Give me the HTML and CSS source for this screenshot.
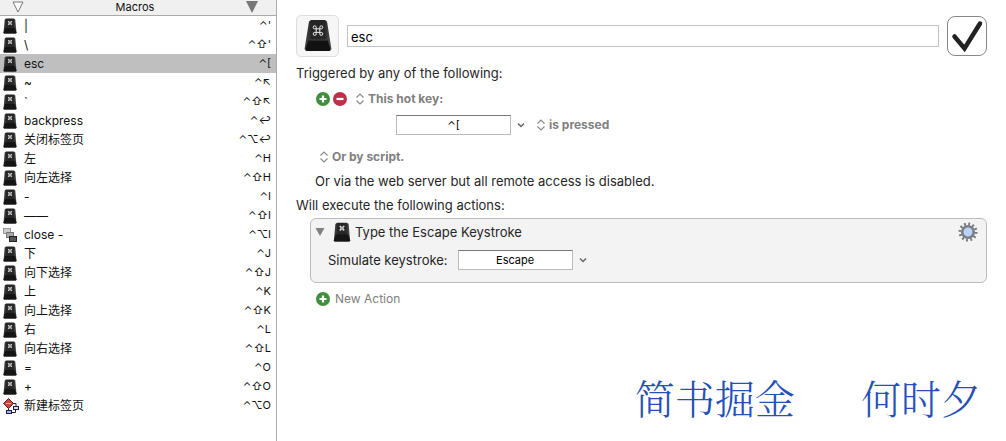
FILE: index.html
```html
<!DOCTYPE html>
<html lang="en">

<head>
    <meta charset="UTF-8">
    <meta name="viewport" content="width=device-width, initial-scale=1.0">
    <title>Macros</title>
    <link rel="stylesheet" href="styles.css">
</head>

<body>
    <!-- shared icons -->
    <svg class="icon_defs" aria-hidden="true">
        <defs>
            <linearGradient id="key_side" x1="0" y1="0" x2="1" y2="0">
                <stop offset="0" stop-color="#4a4a4a" />
                <stop offset="0.25" stop-color="#262626" />
                <stop offset="0.75" stop-color="#262626" />
                <stop offset="1" stop-color="#5a5a5a" />
            </linearGradient>
        </defs>
        <symbol id="key" viewBox="0 0 14 16">
            <path d="M3 0.500h8l1.300 1L13.500 14.500 13 15.500H1L0.500 14.500 1.700 1.500z" fill="url(#key_side)" />
            <path d="M2 10h10l1.500 4.500-.5 1H1l-.5-1z" fill="#151515" />
            <path d="M5.200 3.200l3.600 3.600M8.800 3.200L5.200 6.800" stroke="#d8d8d8" stroke-width="1.300" />
            <path d="M5.500 5h3M7 3.500v3" stroke="#aaa" stroke-width="1" />
        </symbol>
        <symbol id="windows" viewBox="0 0 14 16">
            <rect x="0.500" y="1.500" width="7" height="5" fill="#ccc" stroke="#999" />
            <rect x="3.500" y="5.500" width="7" height="5" fill="#aaa" stroke="#777" />
            <rect x="6.500" y="9.500" width="7" height="5" fill="#555" stroke="#222" />
        </symbol>
        <symbol id="flow" viewBox="0 0 16 16">
            <path d="M10 5.500h3v3M5.500 10v3" fill="none" stroke="#222" />
            <path d="M5.500 0.500l5 5-5 5-5-5z" fill="#c8443c" stroke="#6b1d1a" />
            <path d="M3 5.500h5" stroke="#eba39c" />
            <rect x="10.500" y="8.500" width="5" height="3" fill="#dde" stroke="#1c1c50" />
            <rect x="3.500" y="12.500" width="5" height="3" fill="#aab4f0" stroke="#1c1c50" />
            <path d="M9 14.500h3.500v-3" fill="none" stroke="#222" />
        </symbol>
        <symbol id="updown" viewBox="0 0 8 12">
            <path d="M0.500 4.500L4 1l3.500 3.500M0.500 7.500L4 11l3.500-3.500" fill="none" stroke="#888" stroke-width="1.100" />
        </symbol>
        <symbol id="chevron" viewBox="0 0 8 6">
            <path d="M1 1.500l3 3 3-3" fill="none" stroke="#666" stroke-width="1.500" />
        </symbol>
        <symbol id="plus" viewBox="0 0 14 14">
            <circle cx="7" cy="7" r="7" fill="#3f8f3f" />
            <path d="M7 3.500v7M3.500 7h7" stroke="#fff" stroke-width="2.200" />
        </symbol>
        <symbol id="minus" viewBox="0 0 14 14">
            <circle cx="7" cy="7" r="7" fill="#bf2f4a" />
            <path d="M3.500 7h7" stroke="#fff" stroke-width="2.200" />
        </symbol>
    </svg>

    <div class="editor">
        <div class="sidebar">
            <table class="macro_table">
                <thead>
                    <tr>
                        <th colspan="3">
                            <div class="list_head">
                                <button class="plain" aria-label="Filter"><svg width="12" height="12" viewBox="0 0 12 12"><path d="M1 1h10L6 11z" fill="#fff" stroke="#777" /></svg></button>
                                <span>Macros</span>
                                <button class="plain" aria-label="Sort"><svg width="12" height="12" viewBox="0 0 12 12"><path d="M0 0h12L6 12z" fill="#777" /></svg></button>
                            </div>
                        </th>
                    </tr>
                </thead>
                <tbody>
                    <tr><td class="icon"><svg><use href="#key" /></svg></td><td>|</td><td class="shortcut">⌃'</td></tr>
                    <tr><td class="icon"><svg><use href="#key" /></svg></td><td>\</td><td class="shortcut">⌃⇧'</td></tr>
                    <tr class="selected"><td class="icon"><svg><use href="#key" /></svg></td><td>esc</td><td class="shortcut">⌃[</td></tr>
                    <tr><td class="icon"><svg><use href="#key" /></svg></td><td>~</td><td class="shortcut">⌃↖</td></tr>
                    <tr><td class="icon"><svg><use href="#key" /></svg></td><td>`</td><td class="shortcut">⌃⇧↖</td></tr>
                    <tr><td class="icon"><svg><use href="#key" /></svg></td><td>backpress</td><td class="shortcut">⌃↩</td></tr>
                    <tr><td class="icon"><svg><use href="#key" /></svg></td><td>关闭标签页</td><td class="shortcut">⌃⌥↩</td></tr>
                    <tr><td class="icon"><svg><use href="#key" /></svg></td><td>左</td><td class="shortcut">⌃H</td></tr>
                    <tr><td class="icon"><svg><use href="#key" /></svg></td><td>向左选择</td><td class="shortcut">⌃⇧H</td></tr>
                    <tr><td class="icon"><svg><use href="#key" /></svg></td><td>-</td><td class="shortcut">⌃I</td></tr>
                    <tr><td class="icon"><svg><use href="#key" /></svg></td><td>——</td><td class="shortcut">⌃⇧I</td></tr>
                    <tr><td class="icon"><svg><use href="#windows" /></svg></td><td>close -</td><td class="shortcut">⌃⌥I</td></tr>
                    <tr><td class="icon"><svg><use href="#key" /></svg></td><td>下</td><td class="shortcut">⌃J</td></tr>
                    <tr><td class="icon"><svg><use href="#key" /></svg></td><td>向下选择</td><td class="shortcut">⌃⇧J</td></tr>
                    <tr><td class="icon"><svg><use href="#key" /></svg></td><td>上</td><td class="shortcut">⌃K</td></tr>
                    <tr><td class="icon"><svg><use href="#key" /></svg></td><td>向上选择</td><td class="shortcut">⌃⇧K</td></tr>
                    <tr><td class="icon"><svg><use href="#key" /></svg></td><td>右</td><td class="shortcut">⌃L</td></tr>
                    <tr><td class="icon"><svg><use href="#key" /></svg></td><td>向右选择</td><td class="shortcut">⌃⇧L</td></tr>
                    <tr><td class="icon"><svg><use href="#key" /></svg></td><td>=</td><td class="shortcut">⌃O</td></tr>
                    <tr><td class="icon"><svg><use href="#key" /></svg></td><td>+</td><td class="shortcut">⌃⇧O</td></tr>
                    <tr><td class="icon"><svg class="wide"><use href="#flow" /></svg></td><td>新建标签页</td><td class="shortcut">⌃⌥O</td></tr>
                </tbody>
            </table>
        </div>

        <main class="detail">
            <div class="title_row">
                <button class="macro_icon" aria-label="Macro icon">
                    <svg width="28" height="32" viewBox="0 0 28 32">
                        <path d="M5 1.500L7 0h14l2 1.500L27.500 29l-1.500 2H2L0.500 29z" fill="url(#key_side)" />
                        <path d="M4.500 20h19l3 9-1 2h-23l-1-2z" fill="#111" />
                        <path d="M4.500 20h19" stroke="#444" stroke-width="1" />
                        <path d="M12.200 8.800h3.600v3.600h-3.600zM12.200 8.800h-1.500A1.500 1.500 0 1 1 12.200 7.300zM15.800 8.800V7.300A1.500 1.500 0 1 1 17.300 8.800zM15.800 12.400h1.500A1.500 1.500 0 1 1 15.800 13.900zM12.200 12.400v1.500A1.500 1.500 0 1 1 10.700 12.400z" fill="none" stroke="#eee" stroke-width="1" />
                    </svg>
                </button>
                <input type="text" class="macro_name" aria-label="Macro name" value="esc">
                <label class="enable_box">
                    <input type="checkbox" aria-label="Enabled" checked>
                    <svg width="40" height="40" viewBox="0 0 40 40"><path d="M7.500 20.500L17.500 32.500 33 7.500" fill="none" stroke="#222" stroke-width="4.500" stroke-linecap="round" /></svg>
                </label>
            </div>

            <p class="section">Triggered by any of the following:</p>
            <div class="trigger">
                <button class="plain" aria-label="Add trigger"><svg width="14" height="14"><use href="#plus" /></svg></button>
                <button class="plain" aria-label="Remove trigger"><svg width="14" height="14"><use href="#minus" /></svg></button>
                <label class="popup kind">
                    <svg width="8" height="12"><use href="#updown" /></svg>
                    <select aria-label="Trigger type"><option>This hot key:</option></select>
                </label>
            </div>
            <div class="hotkey">
                <input type="text" class="key_field" aria-label="Hot key" value="⌃[">
                <button class="plain" aria-label="Choose key"><svg width="8" height="6"><use href="#chevron" /></svg></button>
                <label class="popup">
                    <svg width="8" height="12"><use href="#updown" /></svg>
                    <select aria-label="Key event"><option>is pressed</option></select>
                </label>
            </div>
            <div class="script">
                <label class="popup">
                    <svg width="8" height="12"><use href="#updown" /></svg>
                    <select aria-label="Script trigger"><option>Or by script.</option></select>
                </label>
            </div>
            <p class="remote">Or via the web server but all remote access is disabled.</p>

            <p class="section">Will execute the following actions:</p>
            <section class="action">
                <div class="action_head">
                    <button class="plain" aria-label="Collapse action"><svg width="10" height="8" viewBox="0 0 10 8"><path d="M0.500 0h9L5 8z" fill="#808080" /></svg></button>
                    <svg class="action_icon" width="18" height="20"><use href="#key" /></svg>
                    <span>Type the Escape Keystroke</span>
                    <button class="plain gear" aria-label="Action options">
                        <svg width="20" height="20" viewBox="0 0 20 20">
                            <circle cx="10" cy="10" r="8" fill="none" stroke="#777" stroke-width="3" stroke-dasharray="1.800 2.389" />
                            <circle cx="10" cy="10" r="5.800" fill="#b9d3f8" stroke="#7b7f88" stroke-width="2.600" />
                        </svg>
                    </button>
                </div>
                <div class="action_body">
                    <label for="keystroke">Simulate keystroke:</label>
                    <input type="text" class="key_field" id="keystroke" value="Escape">
                    <button class="plain" aria-label="Choose keystroke"><svg width="8" height="6"><use href="#chevron" /></svg></button>
                </div>
            </section>
            <button class="plain new_action"><svg width="14" height="14"><use href="#plus" /></svg>New Action</button>

            <footer class="signature"><span>简书掘金</span><span>何时夕</span></footer>
        </main>
    </div>
</body>

</html>
```

FILE: styles.css
```css
* {
    box-sizing: border-box;
}

body {
    margin: 0;
    background-color: white;
    color: #262626;
    font-family: Inter, "Noto Sans CJK SC", sans-serif;
    font-size: 13px;
    line-height: 16px;
}

p {
    margin: 0;
}

button,
input,
select {
    font: inherit;
    color: inherit;
}

svg {
    display: block;
}

.icon_defs {
    position: absolute;
    width: 0;
    height: 0;
}

.plain {
    display: flex;
    align-items: center;
    padding: 0;
    border: none;
    background: none;
}

.editor {
    display: flex;
    min-height: 100vh;
}

/* macro list */
.sidebar {
    flex: 0 0 277px;
    border-right: 1px solid #aaa;
}

.macro_table {
    width: 100%;
    border-collapse: collapse;
    color: #111;
    font-size: 12px;
}

.macro_table th {
    padding: 0;
    background-color: #f0f0f0;
    border-bottom: 1px solid #aaa;
    font-weight: normal;
}

.list_head {
    display: flex;
    align-items: center;
    justify-content: space-between;
    height: 15px;
    padding: 0 18px 2px 12px;
    font-size: 11px;
}

.macro_table td {
    height: 19px;
    padding: 0;
    line-height: 19px;
}

.macro_table .icon {
    width: 24px;
    padding-left: 3px;
}

.icon svg {
    width: 14px;
    height: 16px;
}

.icon .wide {
    width: 16px;
}

.macro_table .shortcut {
    padding-right: 5px;
    font-size: 11px;
    text-align: right;
}

.selected {
    background-color: #bfbfbf;
}

/* macro editor */
.detail {
    display: flex;
    flex: 1;
    flex-direction: column;
    padding: 15px 19px 16px;
}

.title_row {
    display: flex;
    align-items: center;
    gap: 8px;
}

.macro_icon {
    display: grid;
    place-items: center;
    width: 43px;
    height: 42px;
    padding: 0;
    border: 1px solid #ddd;
    border-radius: 5px;
    background-color: #f6f6f6;
}

.macro_name {
    flex: 1;
    height: 22px;
    padding: 4px 3px 2px;
    border: 1px solid #c2c2c2;
    color: black;
}

.enable_box {
    display: grid;
}

.enable_box input,
.enable_box svg {
    grid-area: 1 / 1;
}

.enable_box input {
    appearance: none;
    width: 40px;
    height: 40px;
    margin: 0;
    border: 1px solid #888;
    border-radius: 8px;
}

.enable_box input:not(:checked) + svg {
    visibility: hidden;
}

.section {
    margin-top: 8px;
}

.trigger,
.hotkey,
.script {
    display: flex;
    align-items: center;
}

.trigger {
    gap: 3px;
    margin-top: 10px;
    padding-left: 20px;
}

.kind {
    margin-left: 6px;
}

.popup {
    display: flex;
    align-items: center;
    gap: 4px;
    color: #808080;
    font-size: 12px;
    font-weight: bold;
}

.popup select {
    appearance: none;
    padding: 0;
    border: none;
    background: none;
}

.hotkey {
    margin-top: 8px;
    padding-left: 100px;
}

.hotkey .popup {
    margin-left: 12px;
}

.key_field {
    width: 115px;
    height: 20px;
    margin-right: 6px;
    padding: 0 4px;
    border: 1px solid #bbb;
    border-top-color: #777;
    background-color: white;
    color: black;
    font-size: 11px;
    text-align: center;
}

.script {
    margin-top: 14px;
    padding-left: 24px;
}

.remote {
    margin-top: 8px;
    padding-left: 19px;
}

.action {
    margin: 5px 0 0 14px;
    padding: 3px 8px 12px 4px;
    border: 1px solid #bbb;
    border-radius: 6px;
    background-color: #f3f3f3;
}

.action_head {
    display: flex;
    align-items: center;
}

.action_icon {
    margin: 0 4px 0 8px;
}

.gear {
    margin-left: auto;
}

.action_body {
    display: flex;
    align-items: center;
    margin-top: 8px;
    padding-left: 13px;
}

.action_body .key_field {
    margin-left: 10px;
}

.new_action {
    align-self: flex-start;
    gap: 5px;
    margin: 8px 0 0 20px;
    color: #808080;
    font-size: 12px;
}

.signature {
    display: flex;
    justify-content: flex-end;
    gap: 66px;
    margin-top: auto;
    padding: 0 6px 2px 0;
    color: #2450b8;
    font-family: "Noto Serif CJK SC", "Noto Sans CJK SC", serif;
    font-size: 40px;
    font-weight: 300;
    line-height: 52px;
}
```
